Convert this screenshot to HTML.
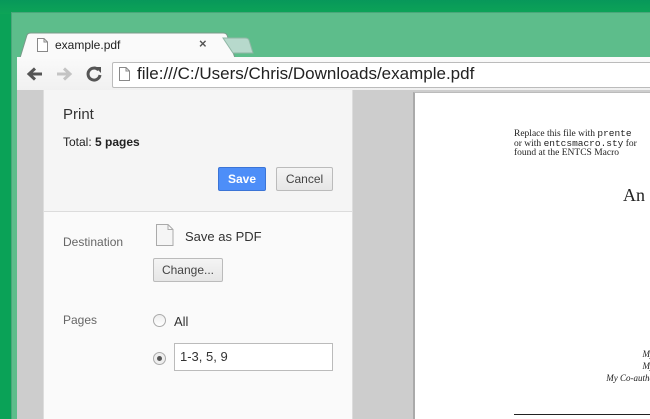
<!DOCTYPE html>
<html><head><style>
*{margin:0;padding:0;box-sizing:border-box}
body{width:650px;height:419px;overflow:hidden;background:#0aa257;font-family:"Liberation Sans",sans-serif;position:relative}
.abs{position:absolute}
</style></head><body>
<div class="abs" style="left:0;top:0;width:650px;height:14px;background:linear-gradient(#07985a,#0da457)"></div>
<div class="abs" style="left:11px;top:12px;width:639px;height:407px;background:#5dbd8b;border-top:1px solid #4aa67a;border-left:1px solid #4aa67a"></div>
<svg class="abs" style="left:15px;top:32px" width="245" height="27">
<path d="M5 26 L12 3 Q13 1 16 1 L208 1 Q211 1 212 3 L220 26 Z" fill="#fafafa" stroke="#7a9a8a"/>
<path d="M208 6 L230 6 Q233 6 234 8 L238 21 L218 21 Z" fill="#b7d9cc" stroke="#8fb7a5"/>
</svg>
<svg class="abs" style="left:37px;top:38px" width="11" height="14"><path d="M0.5 0.5 H7 L10.5 4 V13.5 H0.5 Z M7 0.5 V4 H10.5" fill="#fff" stroke="#888"/></svg>
<div class="abs" style="left:55px;top:38px;font-size:12px;color:#222">example.pdf</div>
<div class="abs" style="left:199px;top:36px;font-size:13px;color:#555;font-weight:bold">×</div>
<div class="abs" style="left:17px;top:57px;width:633px;height:34px;background:linear-gradient(#fafafa,#f0f0f0)"></div>
<svg class="abs" style="left:26px;top:66px" width="18" height="16"><path d="M16 8 H4 M9 2.5 L3 8 L9 13.5" fill="none" stroke="#555" stroke-width="3"/></svg>
<svg class="abs" style="left:56px;top:66px" width="18" height="16"><path d="M1 8 H13 M8 2.5 L14 8 L8 13.5" fill="none" stroke="#c4c4c4" stroke-width="3"/></svg>
<svg class="abs" style="left:85px;top:65px" width="18" height="18"><path d="M13.5 5 A6 6 0 1 0 15 10" fill="none" stroke="#555" stroke-width="3"/><path d="M10 2 L16 2 L16 8 Z" fill="#555"/></svg>
<div class="abs" style="left:112px;top:62px;width:545px;height:26px;background:#fff;border:1px solid #bbb;border-radius:2px"></div>
<svg class="abs" style="left:119px;top:67px" width="11" height="14"><path d="M0.5 0.5 H7 L10.5 4 V13.5 H0.5 Z M7 0.5 V4 H10.5" fill="#fff" stroke="#888"/></svg>
<div class="abs" style="left:137px;top:64px;font-size:17px;color:#222">file:///C:/Users/Chris/Downloads/example.pdf</div>
<div class="abs" style="left:17px;top:90px;width:633px;height:329px;background:#cdcdcd"></div>
<div class="abs" style="left:43px;top:90px;width:310px;height:329px;background:#fafafa;border-left:1px solid #ddd;border-right:1px solid #ddd"></div>
<div class="abs" style="left:44px;top:90px;width:308px;height:122px;background:#f5f5f5;border-bottom:1px solid #dcdcdc"></div>
<div class="abs" style="left:63px;top:106px;font-size:15px;color:#333">Print</div>
<div class="abs" style="left:63px;top:135px;font-size:12px;color:#222">Total: <b>5 pages</b></div>
<div class="abs" style="left:218px;top:167px;width:48px;height:24px;background:#4d8ef8;border:1px solid #3b74d6;border-radius:2px;color:#fff;font-size:12px;font-weight:bold;text-align:center;line-height:22px">Save</div>
<div class="abs" style="left:276px;top:167px;width:57px;height:24px;background:linear-gradient(#f4f4f4,#e6e6e6);border:1px solid #bbb;border-radius:2px;color:#444;font-size:12px;text-align:center;line-height:22px">Cancel</div>
<div class="abs" style="left:63px;top:235px;font-size:12px;color:#666">Destination</div>
<svg class="abs" style="left:156px;top:224px" width="18" height="22"><path d="M0.5 0.5 H12 L17 5.5 V21.5 H0.5 Z M12 0.5 V5.5 H17" fill="#f5f5f5" stroke="#aaa"/></svg>
<div class="abs" style="left:185px;top:229px;font-size:13px;color:#333">Save as PDF</div>
<div class="abs" style="left:153px;top:258px;width:70px;height:24px;background:linear-gradient(#f4f4f4,#e6e6e6);border:1px solid #bbb;border-radius:2px;color:#444;font-size:12px;text-align:center;line-height:22px">Change...</div>
<div class="abs" style="left:63px;top:313px;font-size:12px;color:#666">Pages</div>
<div class="abs" style="left:153px;top:314px;width:13px;height:13px;border:1px solid #aaa;border-radius:50%;background:linear-gradient(#eee,#fff)"></div>
<div class="abs" style="left:174px;top:314px;font-size:13px;color:#333">All</div>
<div class="abs" style="left:153px;top:352px;width:13px;height:13px;border:1px solid #aaa;border-radius:50%;background:#eee"><div style="position:absolute;left:3px;top:3px;width:5px;height:5px;border-radius:50%;background:#555"></div></div>
<div class="abs" style="left:174px;top:343px;width:159px;height:28px;background:#fff;border:1px solid #bbb;padding-left:5px;font-size:13px;color:#333;line-height:26px">1-3, 5, 9</div>
<div class="abs" style="left:413px;top:92px;width:237px;height:327px;background:#fff;border-left:2px solid #aaa;border-top:1px solid #bbb"></div>
<div class="abs" style="left:514px;top:129px;font-family:'Liberation Serif',serif;font-size:9.5px;line-height:9px;color:#222;white-space:nowrap">Replace this file with <span style="font-family:'Liberation Mono',monospace">prente</span><br>or with <span style="font-family:'Liberation Mono',monospace">entcsmacro.sty</span> for<br>found at the ENTCS Macro</div>
<div class="abs" style="left:623px;top:185px;font-family:'Liberation Serif',serif;font-size:18px;color:#222">An</div>
<div class="abs" style="left:594px;top:348px;width:60px;font-family:'Liberation Serif',serif;font-style:italic;font-size:9px;line-height:12px;color:#222;text-align:right;white-space:nowrap">My<br>My<br>My Co-autho</div>
<div class="abs" style="left:514px;top:414px;width:136px;height:1px;background:#222"></div>
</body></html>
